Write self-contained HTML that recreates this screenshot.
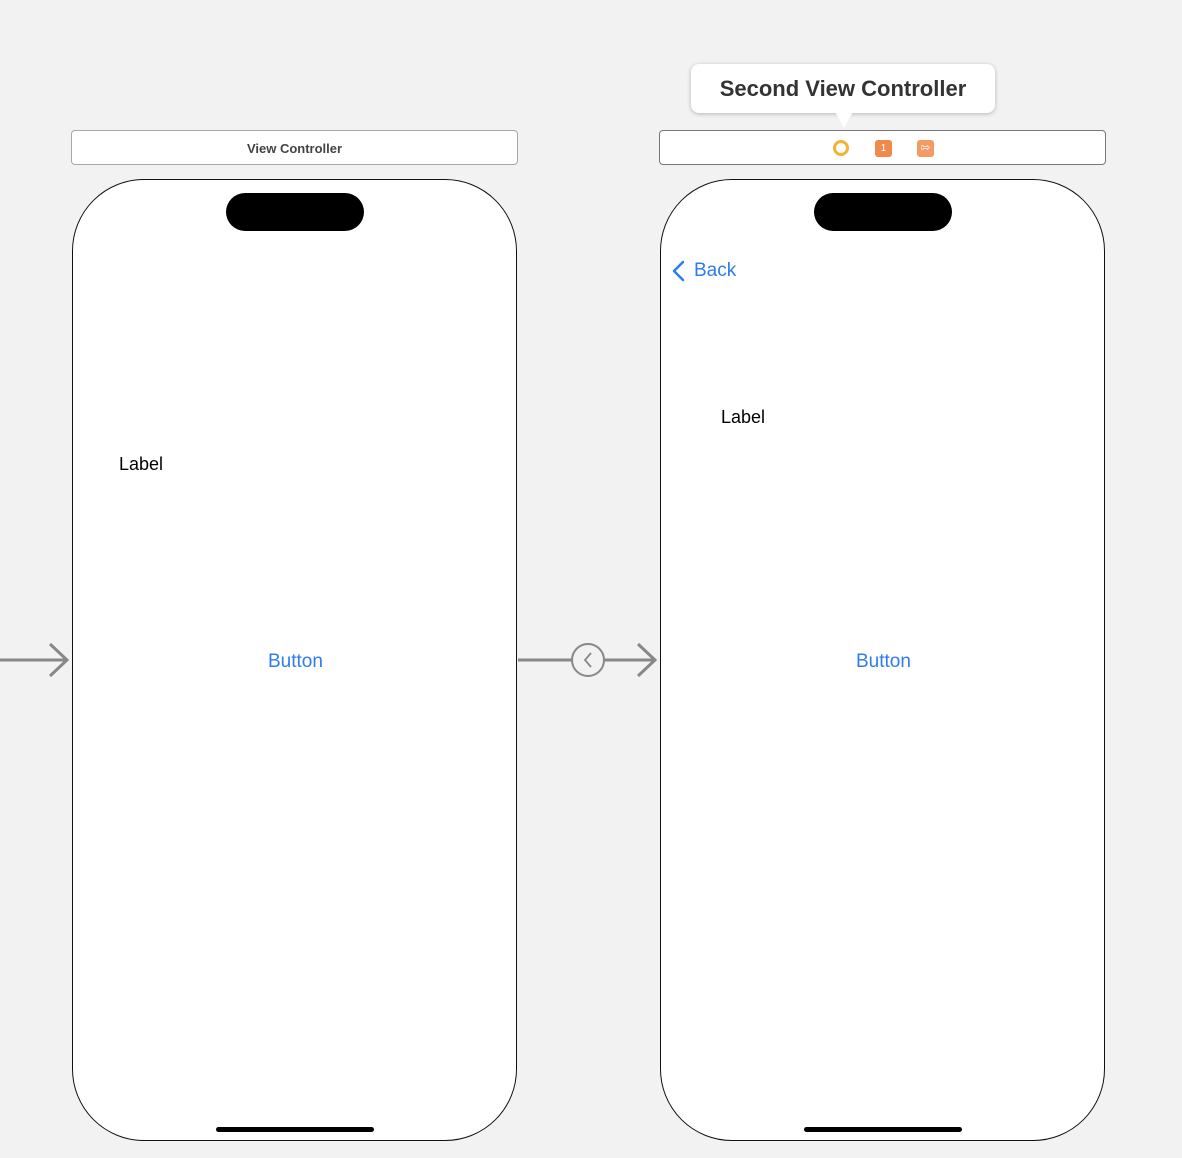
<!DOCTYPE html>
<html><head><style>
body{margin:0;width:1182px;height:1158px;background:#f2f2f2;position:relative;overflow:hidden;font-family:"Liberation Sans",sans-serif}
.bar{position:absolute;top:130px;height:35px;width:447px;background:#fff;border:1px solid #a8a8a8;border-radius:4px;box-sizing:border-box}
.phone{position:absolute;top:179px;width:445px;height:962px;background:#fff;border:1.5px solid #111;border-radius:72px;box-sizing:border-box}
.island{position:absolute;top:13px;left:153px;width:138px;height:38px;background:#000;border-radius:19px}
.home{position:absolute;bottom:8px;left:143px;width:158px;height:5px;background:#000;border-radius:3px}
.t{position:absolute;font-size:18px}
.blue{color:#2f7bf0;font-size:19px}
</style></head><body>
<div class="bar" style="left:71px"><div style="text-align:center;font-size:13px;font-weight:bold;color:#444;line-height:35px">View Controller</div></div>
<div class="bar" style="left:659px;border-color:#777">
<div style="position:absolute;left:173px;top:9px;border:3px solid #f0b43a;border-radius:50%;box-sizing:border-box;width:16px;height:16px"></div>
<div style="position:absolute;left:215px;top:9px;width:17px;height:17px;background:#ef8a4c;border-radius:3px;color:#fff;font-size:10px;text-align:center;line-height:17px">1</div>
<div style="position:absolute;left:257px;top:9px;width:17px;height:17px;background:#f39a66;border-radius:3px;color:#fff;font-size:11px;text-align:center;line-height:17px">&#8688;</div>
</div>
<div style="position:absolute;left:691px;top:64px;width:304px;height:49px;background:#fff;border-radius:8px;box-shadow:0 1px 4px rgba(0,0,0,.25);font-weight:bold;font-size:22px;color:#333;text-align:center;line-height:49px">Second View Controller</div>
<div style="position:absolute;left:834px;top:110px;width:0;height:0;border-left:10px solid transparent;border-right:10px solid transparent;border-top:18px solid #fff"></div>
<div class="phone" style="left:72px"><div class="island"></div><div class="home"></div>
<div class="t" style="left:46px;top:274px">Label</div>
<div class="t blue" style="left:195px;top:471px">Button</div></div>
<div class="phone" style="left:660px"><div class="island"></div><div class="home"></div>
<svg style="position:absolute;left:8px;top:80px" width="20" height="24"><path d="M14 2 L5 11 L14 20" stroke="#2f7bf0" stroke-width="2.5" fill="none" stroke-linecap="round" stroke-linejoin="round"/></svg>
<div class="t blue" style="left:33px;top:80px">Back</div>
<div class="t" style="left:60px;top:227px">Label</div>
<div class="t blue" style="left:195px;top:471px">Button</div></div>
<svg style="position:absolute;left:0;top:640px" width="1182" height="42">
<g stroke="#888" stroke-width="3" fill="none">
<line x1="0" y1="20" x2="66" y2="20"/><path d="M50 4 L67 20 L50 36"/>
<line x1="518" y1="20" x2="572" y2="20"/><circle cx="588" cy="20" r="16" stroke-width="2"/>
<path d="M591 13 L585 20 L591 27" stroke-width="1.8"/>
<line x1="604" y1="20" x2="654" y2="20"/><path d="M638 4 L655 20 L638 36"/>
</g></svg>
</body></html>
